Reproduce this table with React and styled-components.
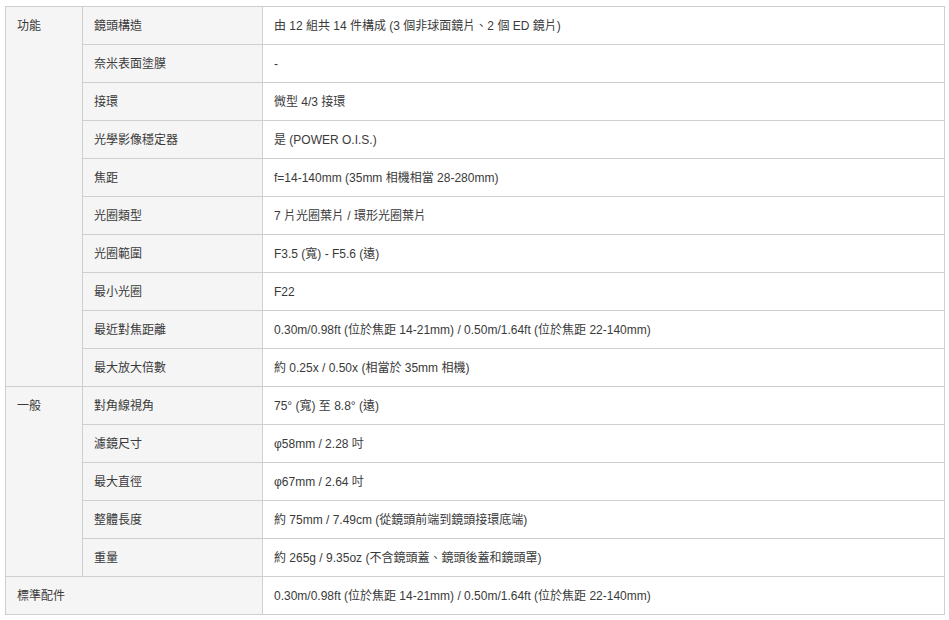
import React from "react";
import styled, { createGlobalStyle } from "styled-components";

const GlobalStyle = createGlobalStyle`
  body {
    margin: 0;
    background: #fff;
    font-family: "Liberation Sans", Arial, "Noto Sans CJK TC", sans-serif;
  }
`;

const groups = [
  {
    title: "功能",
    rows: [
      ["鏡頭構造", "由 12 組共 14 件構成 (3 個非球面鏡片、2 個 ED 鏡片)"],
      ["奈米表面塗膜", "-"],
      ["接環", "微型 4/3 接環"],
      ["光學影像穩定器", "是 (POWER O.I.S.)"],
      ["焦距", "f=14-140mm (35mm 相機相當 28-280mm)"],
      ["光圈類型", "7 片光圈葉片 / 環形光圈葉片"],
      ["光圈範圍", "F3.5 (寬) - F5.6 (遠)"],
      ["最小光圈", "F22"],
      ["最近對焦距離", "0.30m/0.98ft (位於焦距 14-21mm) / 0.50m/1.64ft (位於焦距 22-140mm)"],
      ["最大放大倍數", "約 0.25x / 0.50x (相當於 35mm 相機)"],
    ],
  },
  {
    title: "一般",
    rows: [
      ["對角線視角", "75° (寬) 至 8.8° (遠)"],
      ["濾鏡尺寸", "φ58mm / 2.28 吋"],
      ["最大直徑", "φ67mm / 2.64 吋"],
      ["整體長度", "約 75mm / 7.49cm (從鏡頭前端到鏡頭接環底端)"],
      ["重量", "約 265g / 9.35oz (不含鏡頭蓋、鏡頭後蓋和鏡頭罩)"],
    ],
  },
];

const Wrap = styled.div`
  padding: 6px 4px 0 5px;
`;

const Table = styled.table`
  width: 940px;
  border-collapse: collapse;
  table-layout: fixed;
  font-size: 12px;
  color: #3a3a3a;
`;

const Cell = styled.td`
  height: 38px;
  padding: 0 11px;
  border: 1px solid #cfcfcf;
  vertical-align: middle;
  line-height: 14px;
  background: ${(p) => (p.$shade ? "#f5f5f5" : "#fff")};
  box-sizing: border-box;
`;

const GroupCell = styled(Cell)`
  vertical-align: top;
  padding-top: 12px;
`;

export default function App() {
  return (
    <Wrap>
      <GlobalStyle />
      <Table>
        <colgroup>
          <col style={{ width: 77 }} />
          <col style={{ width: 180 }} />
          <col />
        </colgroup>
        <tbody>
          {groups.map((g) =>
            g.rows.map(([label, value], i) => (
              <tr key={g.title + label}>
                {i === 0 && (
                  <GroupCell $shade rowSpan={g.rows.length}>
                    {g.title}
                  </GroupCell>
                )}
                <Cell $shade>{label}</Cell>
                <Cell>{value}</Cell>
              </tr>
            ))
          )}
          <tr>
            <Cell $shade colSpan={2}>
              標準配件
            </Cell>
            <Cell>0.30m/0.98ft (位於焦距 14-21mm) / 0.50m/1.64ft (位於焦距 22-140mm)</Cell>
          </tr>
        </tbody>
      </Table>
    </Wrap>
  );
}
